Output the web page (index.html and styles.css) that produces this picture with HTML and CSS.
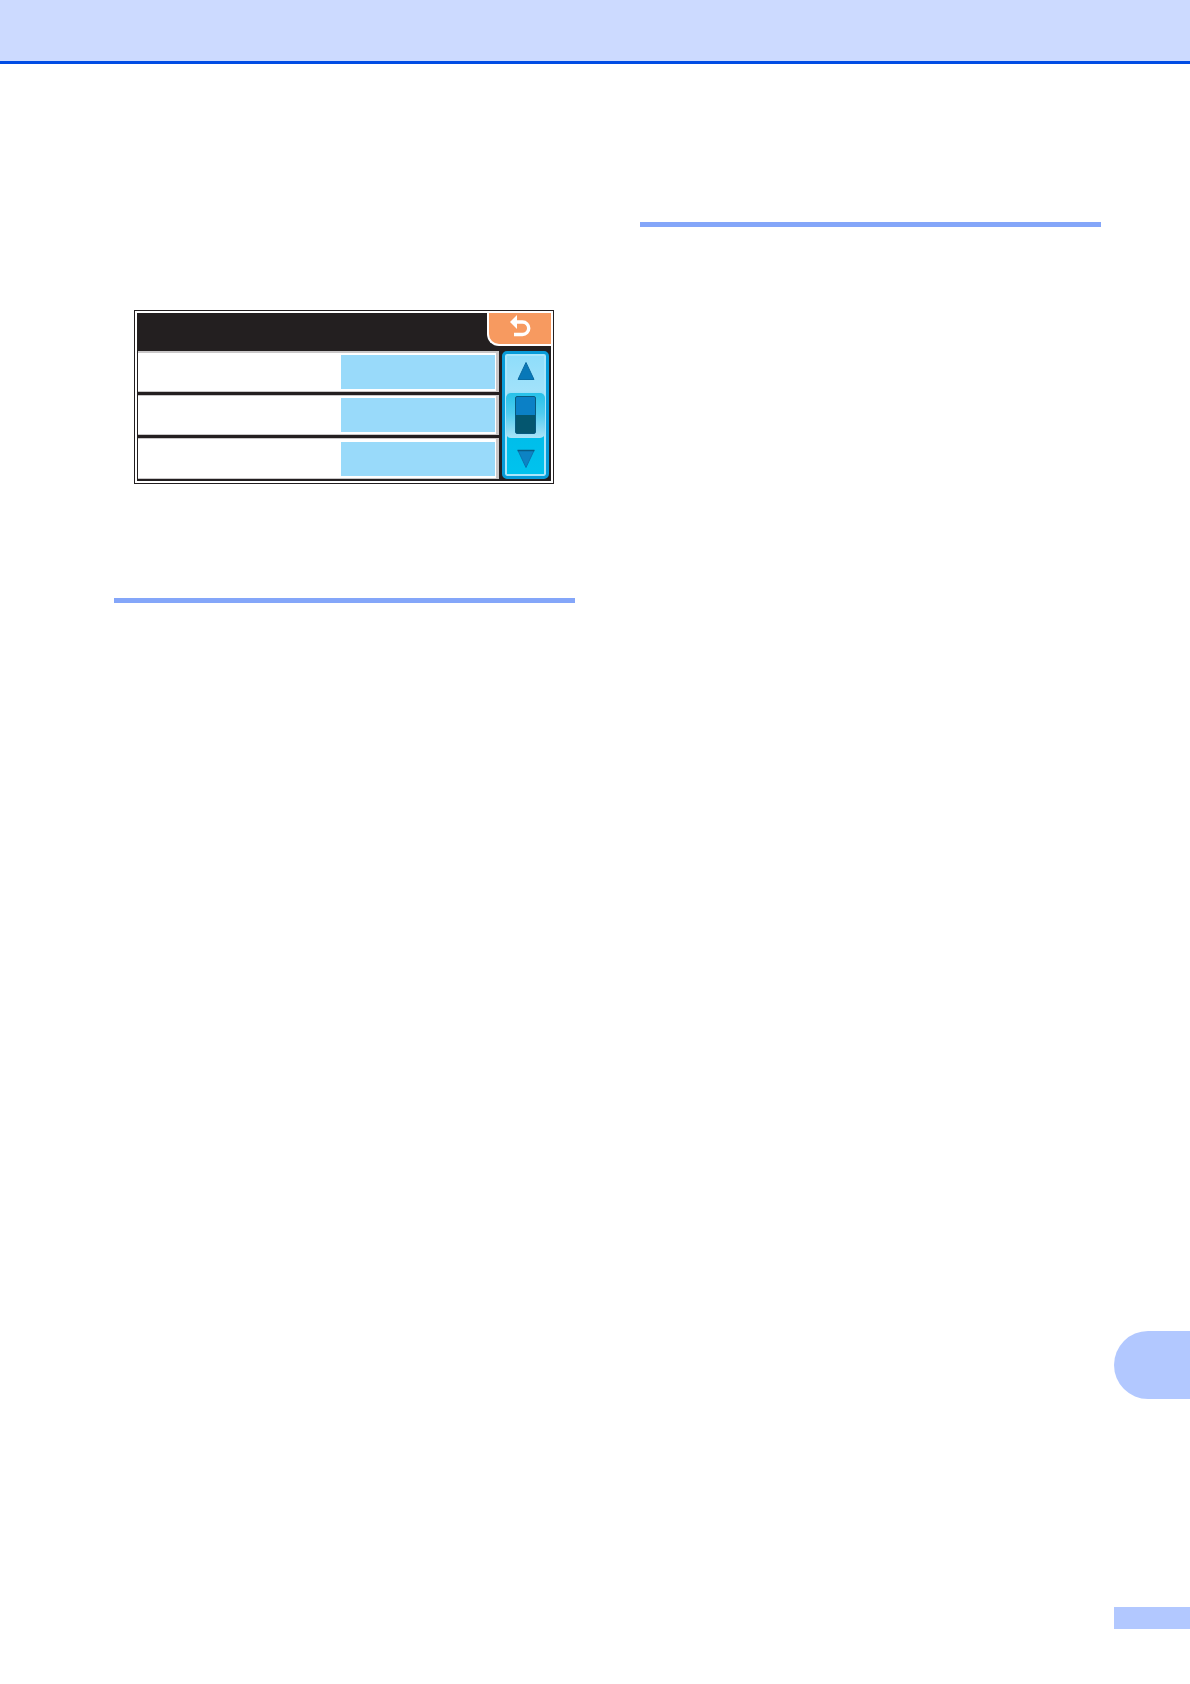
FILE: index.html
```html
<!DOCTYPE html>
<html lang="en">
<head>
    <meta charset="UTF-8">
    <meta name="viewport" content="width=device-width, initial-scale=1.0">
    <title>Manual</title>
    <link rel="stylesheet" href="styles.css">
</head>
<body>
    <header class="page-header"></header>
    <div class="page-body">
        <main class="columns">
            <section class="column column-left">
                <div class="screen">
                    <div class="screen-top">
                        <button class="back" type="button" aria-label="Back">
                            <svg width="22" height="24" viewBox="0 0 22 24">
                                <path d="M1 7 L8 0 V14 Z" fill="#fff"/>
                                <path d="M6 7 H13.5 A6 6 0 0 1 13.5 19.5 H5" fill="none" stroke="#fff" stroke-width="3.4"/>
                            </svg>
                        </button>
                    </div>
                    <div class="screen-main">
                        <div class="rows">
                            <div class="row"><div class="value"></div></div>
                            <div class="row"><div class="value"></div></div>
                            <div class="row"><div class="value"></div></div>
                        </div>
                        <div class="scroller">
                            <button class="arrow" type="button" aria-label="Up">
                                <svg width="20" height="20" viewBox="0 0 20 20">
                                    <path d="M10 1.5 L18 18.5 H2 Z" fill="#0878b8" stroke="#086aa2"/>
                                </svg>
                            </button>
                            <div class="thumb-area"><div class="thumb"></div></div>
                            <button class="arrow" type="button" aria-label="Down">
                                <svg width="20" height="20" viewBox="0 0 20 20">
                                    <path d="M2 1.5 H18 L10 18.5 Z" fill="#0d83c4" stroke="#0a75b0"/>
                                    <path d="M1.5 1.5 H18.5" stroke="#085c86" stroke-width="1.5"/>
                                </svg>
                            </button>
                        </div>
                    </div>
                </div>
                <hr class="rule">
            </section>
            <section class="column column-right">
                <hr class="rule">
            </section>
        </main>
        <aside class="side">
            <div class="chapter-tab"></div>
            <div class="page-number"></div>
        </aside>
    </div>
</body>
</html>
```
FILE: styles.css
```css
* { box-sizing: border-box; margin: 0; padding: 0; }
body {
    display: flex;
    flex-direction: column;
    min-height: 100vh;
    font-family: "Liberation Sans", Arial, sans-serif;
    background-color: #fff;
}
.page-header {
    height: 64px;
    background-color: #ccdaff;
    border-bottom: 3px solid #004ce4;
}
.page-body {
    flex: 1;
    display: flex;
}
.columns {
    flex: 1;
    display: grid;
    grid-template-columns: 1fr 1fr;
    gap: 65px;
    padding: 0 13px 0 114px;
}
.column-left { padding-top: 246px; }
.column-right { padding-top: 158px; }
.rule {
    height: 5px;
    border: none;
    background-color: #84a6f9;
}

/* printer display */
.screen {
    margin: 0 21px 114px 20px;
    padding: 2px;
    border: 1px solid #231f20;
}
.screen-top {
    display: flex;
    justify-content: flex-end;
    height: 38px;
    background-color: #231f20;
}
.back {
    display: flex;
    justify-content: center;
    align-items: flex-start;
    width: 64px;
    height: 33px;
    padding-top: 2px;
    border: solid #fff;
    border-width: 0 0 2px 2px;
    border-bottom-left-radius: 12px;
    background-color: #f79a60;
    cursor: pointer;
}
.screen-main {
    display: flex;
    gap: 3px;
    padding: 0 2px 2px 1px;
    background-color: #231f20;
}
.rows {
    flex: 1;
    display: flex;
    flex-direction: column;
    gap: 3px;
}
.row {
    flex: 1;
    display: flex;
    justify-content: flex-end;
    padding: 1px;
    border: solid #c9c7c8;
    border-width: 1px 3px 1px 0;
    background-color: #fff;
}
.row:first-child { border-top-width: 2px; }
.row:last-child { padding-top: 2px; }
.value {
    width: 154px;
    margin: 1px 0;
    background-color: #99dafa;
}
.scroller {
    display: flex;
    flex-direction: column;
    justify-content: space-between;
    width: 47px;
    height: 128px;
    padding: 0 1px;
    border: 3px solid #079bd8;
    border-radius: 5px;
    background: linear-gradient(#8eddfa, #a2e2fa 30%, #00bdea 65%, #00c3ee);
    box-shadow: inset 0 0 0 2px #a9e6fb;
}
.arrow {
    display: flex;
    justify-content: center;
    align-items: center;
    height: 34px;
    border: none;
    background: none;
    cursor: pointer;
}
.thumb-area {
    display: flex;
    justify-content: center;
    align-items: center;
    height: 45px;
    border-radius: 5px;
    background: linear-gradient(#26c1e9, #50ccef 45%, #a9e3f8);
}
.thumb {
    width: 21px;
    height: 38px;
    border: 1px solid #075a80;
    border-radius: 2px;
    background: linear-gradient(#0b80c6 50%, #04566f 50%);
}

/* right edge */
.side {
    display: flex;
    flex-direction: column;
    justify-content: flex-end;
    gap: 208px;
    width: 76px;
    padding-bottom: 55px;
}
.chapter-tab {
    height: 68px;
    border-radius: 34px 0 0 34px;
    background-color: #b2c8ff;
}
.page-number {
    height: 22px;
    background-color: #b2c8ff;
}
```
